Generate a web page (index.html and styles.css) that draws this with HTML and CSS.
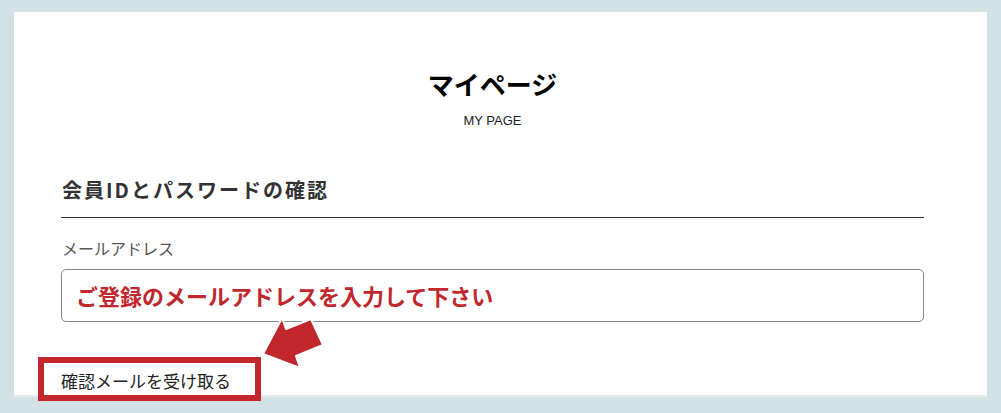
FILE: index.html
```html
<!DOCTYPE html>
<html lang="ja">

<head>
    <meta charset="UTF-8">
    <meta name="viewport" content="width=device-width, initial-scale=1">
    <title>マイページ</title>
    <link rel="stylesheet" href="styles.css">
</head>

<body>
    <div class="panel">
        <h1 class="page-title">マイページ</h1>
        <p class="page-sub">MY PAGE</p>

        <h2 class="section-title">会員IDとパスワードの確認</h2>

        <div class="form-group">
            <label class="field-label">メールアドレス</label>
            <div class="input-box">ご登録のメールアドレスを入力して下さい</div>
        </div>

        <div class="highlight">
            <span class="confirm-link">確認メールを受け取る</span>
        </div>

        <!-- annotation arrow -->
        <svg class="arrow" viewBox="250 300 90 80" width="90" height="80">
            <polygon points="263,354 282,318 286,329 311,319 323,345 296,356 300,368"
                fill="#c1272d" stroke="#fff" stroke-width="2" stroke-linejoin="round" />
        </svg>
    </div>
</body>

</html>
```

FILE: styles.css
```css
body {
    font-family: "Noto Sans CJK JP", "Noto Sans", sans-serif;
    background: #d2e1e5;
    margin: 0;
    padding: 12px 14px 0;
    min-height: 413px;
    box-sizing: border-box;
}

.panel {
    position: relative;
    background: #fff;
    height: 385px;
    box-sizing: border-box;
    padding: 52px 63px 0 47px;
    border-bottom: 2px solid #e6eced;
}

.page-title {
    text-align: center;
    font-size: 26px;
    line-height: 39px;
    font-weight: bold;
    color: #000;
    margin: 0;
}

.page-sub {
    text-align: center;
    font-family: "Liberation Sans", Arial, sans-serif;
    font-size: 13px;
    line-height: 20px;
    color: #222;
    margin: 8px 0 0;
}

.section-title {
    font-size: 20px;
    line-height: 30px;
    font-weight: bold;
    letter-spacing: 2px;
    color: #333;
    margin: 44px 0 0;
    padding: 0 0 12px 1px;
    border-bottom: 1px solid #333;
}

.form-group {
    margin-top: 18px;
}

.field-label {
    display: block;
    font-size: 16px;
    line-height: 24px;
    color: #555;
    padding-left: 1px;
    margin-bottom: 9px;
}

.input-box {
    height: 53px;
    box-sizing: border-box;
    border: 1px solid #888;
    border-radius: 5px;
    padding: 0 14px;
    font-size: 22px;
    line-height: 51px;
    font-weight: bold;
    color: #c1272d;
}

.highlight {
    position: relative;
    z-index: 1;
    width: max-content;
    margin: 35px 0 0 -23px;
    border: 6px solid #c1272d;
    padding: 4px 24px 0 17px;
    height: 28px;
    background: #fff;
}

.confirm-link {
    display: block;
    font-size: 17px;
    line-height: 28px;
    color: #222;
}

.arrow {
    position: absolute;
    left: 236px;
    top: 288px;
}
```
